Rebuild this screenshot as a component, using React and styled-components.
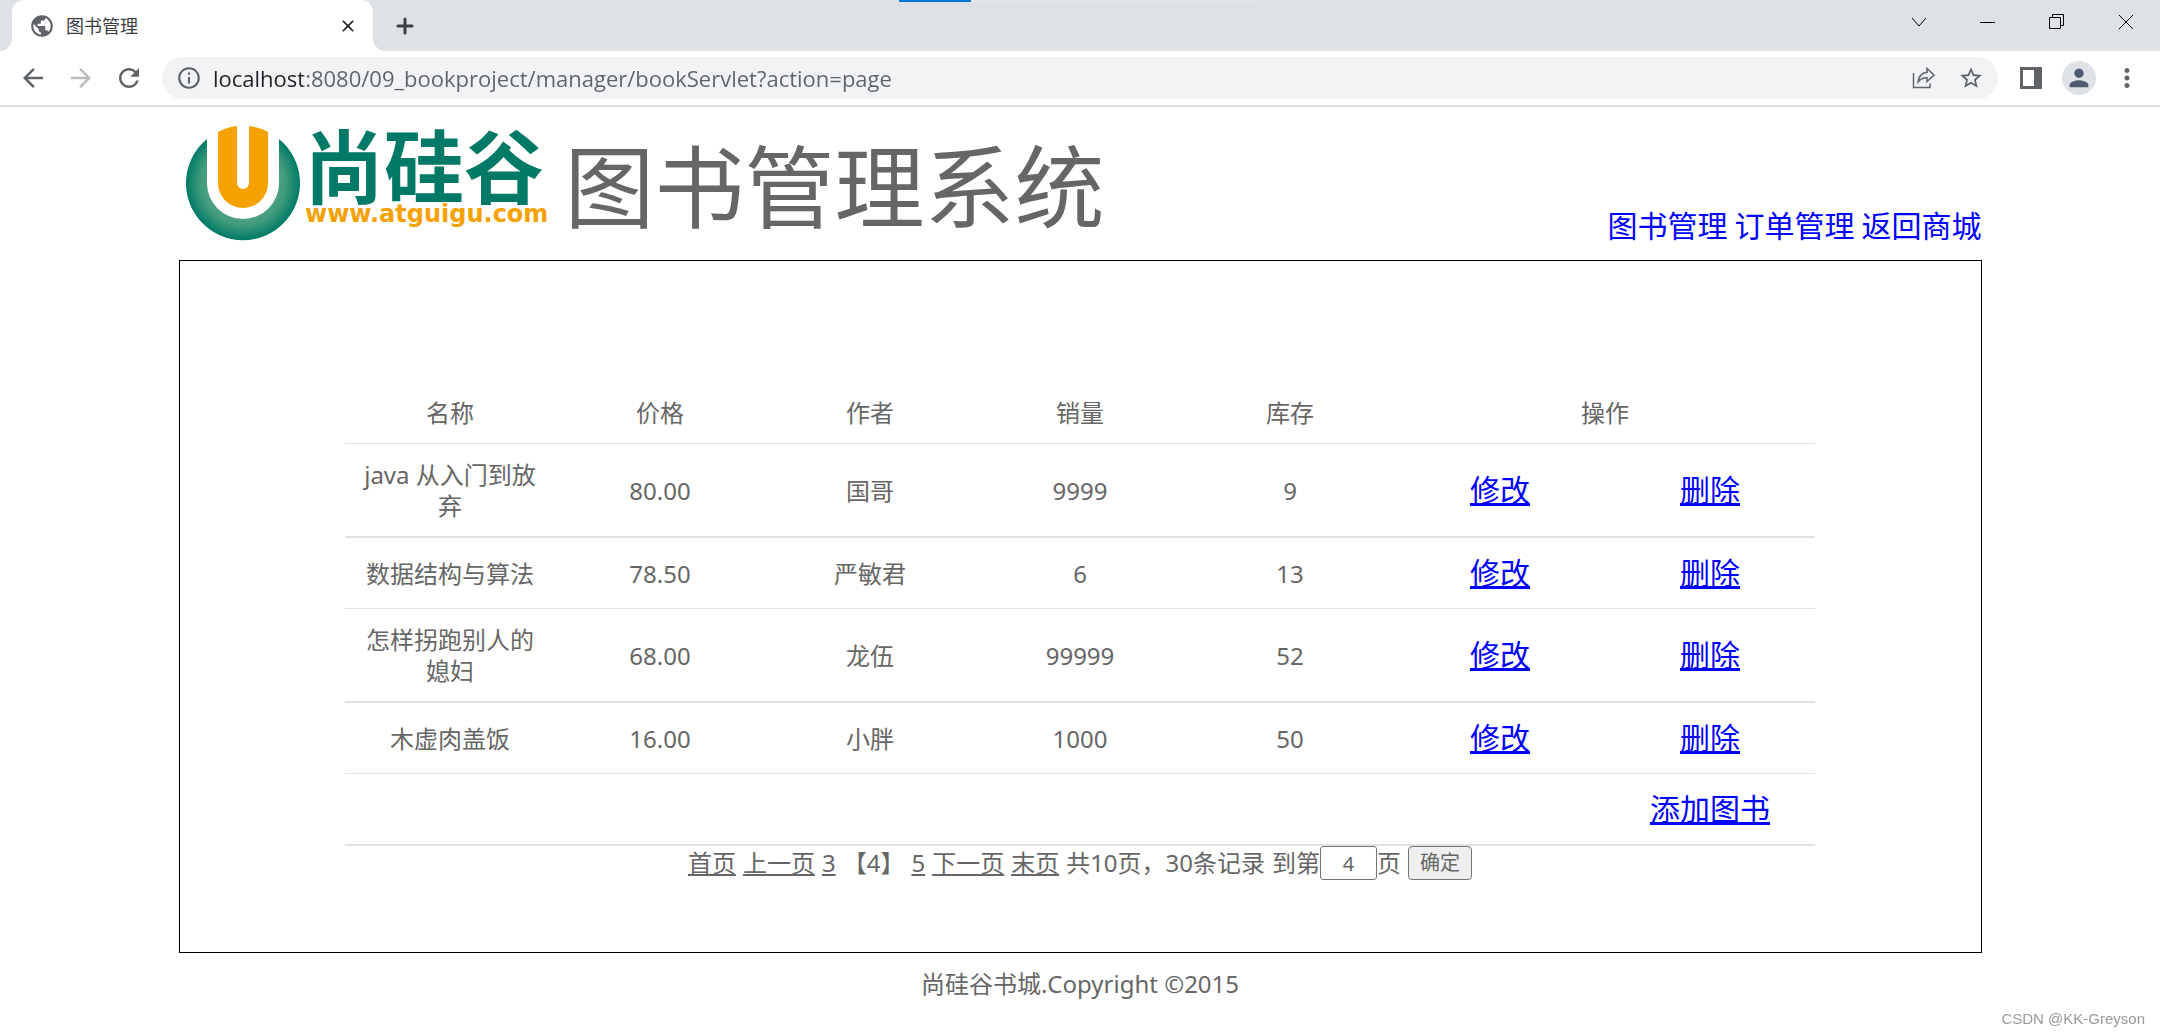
import React from 'react';
import styled, {createGlobalStyle} from 'styled-components';
import {
    MdArrowBack,
    MdArrowForward,
    MdClose,
    MdInfoOutline,
    MdMoreVert,
    MdPerson,
    MdPublic,
    MdRefresh,
    MdStarBorder
} from 'react-icons/md';

const books=[
    {name:'java 从入门到放弃',price:'80.00',author:'国哥',sales:'9999',stock:'9'},
    {name:'数据结构与算法',price:'78.50',author:'严敏君',sales:'6',stock:'13'},
    {name:'怎样拐跑别人的媳妇',price:'68.00',author:'龙伍',sales:'99999',stock:'52'},
    {name:'木虚肉盖饭',price:'16.00',author:'小胖',sales:'1000',stock:'50'}
];

function ShareIcon(){
    return(
        <svg width="24" height="24" viewBox="0 0 24 24" fill="none" stroke="#5f6368" strokeWidth="1.5">
        <path d="M1.5 7V21.5H18V17.5" />
        <path d="M15 2.5L22 9L15 15.5V11.8C11 11.5 8.500 12.800 6 16C6.700 10.500 9.500 7 15 6.300Z" />
        </svg>
    );
}

function PanelIcon(){
    return(
        <svg width="22" height="22" viewBox="0 0 22 22">
        <rect width="22" height="22" fill="#5f6368" />
        <rect x="3" y="3" width="11" height="16" fill="#fff" />
        </svg>
    );
}

function Logo(){
    return(
        <LogoSvg width="384" height="143" viewBox="0 -10 384 143" role="img" aria-label="尚硅谷">
        <defs>
        <radialGradient id="ball" gradientUnits="userSpaceOnUse" cx="64" cy="66" r="57">
        <stop offset="0.6" stopColor="#4fa283" />
        <stop offset="0.75" stopColor="#3f9a7b" />
        <stop offset="1" stopColor="#007a66" />
        </radialGradient>
        </defs>
        <path d="M28 22A57 57 0 1 0 100 22V66A36 36 0 0 1 28 66Z" fill="url(#ball)" />
        <path d="M39 15Q48 10 58 9V66A6 6 0 0 0 70 66V9Q80 10 89 15V66A25 25 0 0 1 39 66Z" fill="#f5a100" />
        <LogoName x="125" y="80">尚硅谷</LogoName>
        <LogoUrl x="126" y="105">www.atguigu.com</LogoUrl>
        </LogoSvg>
    );
}

function Browser(){
    return(
        <BrowserWrapper>
        <LoadBar><span /></LoadBar>
        <TabStrip>
        <Tab>
        <MdPublic size={26} color="#5f6368" />
        <TabTitle>图书管理</TabTitle>
        <IconButton aria-label="关闭标签页"><MdClose size={20} color="#202124" /></IconButton>
        </Tab>
        <NewTab aria-label="新标签页">
        <svg width="18" height="18" stroke="#3c4043" strokeWidth="3" strokeLinecap="round"><path d="M9 2V16M2 9H16" /></svg>
        </NewTab>
        <WindowButtons>
        <IconButton aria-label="标签列表">
        <svg width="16" height="16" fill="none" stroke="#000"><path d="M1 4L8 12L15 4" /></svg>
        </IconButton>
        <IconButton aria-label="最小化">
        <svg width="16" height="16"><rect y="8" width="15" height="1" /></svg>
        </IconButton>
        <IconButton aria-label="还原">
        <svg width="16" height="16" fill="none" stroke="#000"><path d="M0.500 3.500H11.500V14.500H0.500ZM3.500 3.500V0.500H14.500V11.500H11.500" /></svg>
        </IconButton>
        <IconButton aria-label="关闭">
        <svg width="16" height="16" fill="none" stroke="#000"><path d="M1 1L15 15M15 1L1 15" /></svg>
        </IconButton>
        </WindowButtons>
        </TabStrip>
        <Toolbar>
        <NavButtons>
        <IconButton aria-label="后退"><MdArrowBack size={30} color="#5f6368" /></IconButton>
        <IconButton aria-label="前进"><MdArrowForward size={30} color="#babcbe" /></IconButton>
        <IconButton aria-label="重新加载"><MdRefresh size={30} color="#5f6368" /></IconButton>
        </NavButtons>
        <AddressBar>
        <MdInfoOutline size={26} color="#5f6368" />
        <Address aria-label="地址" defaultValue="localhost:8080/09_bookproject/manager/bookServlet?action=page" />
        <IconButton aria-label="分享"><ShareIcon /></IconButton>
        <IconButton aria-label="收藏"><MdStarBorder size={26} color="#5f6368" /></IconButton>
        </AddressBar>
        <Tools>
        <IconButton aria-label="侧边栏"><PanelIcon /></IconButton>
        <Avatar aria-label="用户"><MdPerson size={28} color="#4f5b70" /></Avatar>
        <MenuButton aria-label="更多"><MdMoreVert size={30} color="#5f6368" /></MenuButton>
        </Tools>
        </Toolbar>
        </BrowserWrapper>
    );
}

function BookTable(){
    return(
        <Table>
        <thead>
        <tr>
        <th>名称</th>
        <th>价格</th>
        <th>作者</th>
        <th>销量</th>
        <th>库存</th>
        <th colSpan="2">操作</th>
        </tr>
        </thead>
        <tbody>
        {books.map(book=>(
            <tr key={book.name}>
            <td>{book.name}</td>
            <td>{book.price}</td>
            <td>{book.author}</td>
            <td>{book.sales}</td>
            <td>{book.stock}</td>
            <td><ActionLink href="#edit">修改</ActionLink></td>
            <td><ActionLink href="#delete">删除</ActionLink></td>
            </tr>
        ))}
        <tr>
        <td colSpan="6"></td>
        <td><ActionLink href="#add">添加图书</ActionLink></td>
        </tr>
        </tbody>
        </Table>
    );
}

function Pagination(){
    return(
        <PageNav>
        <a href="#first">首页</a>
        <a href="#prev">上一页</a>
        <a href="#3">3</a>
        <span>【4】</span>
        <a href="#5">5</a>
        <a href="#next">下一页</a>
        <a href="#last">末页</a>
        <span>共10页，30条记录</span>
        <PageJump>
        <label htmlFor="pn">到第</label>
        <PageInput id="pn" defaultValue="4" />
        <span>页</span>
        </PageJump>
        <PageButton type="button">确定</PageButton>
        </PageNav>
    );
}

export default function App(){
    return(
        <>
        <GlobalStyle />
        <Browser />
        <Page>
        <Header>
        <Logo />
        <Title>图书管理系统</Title>
        <Menu>
        <a href="#books">图书管理</a>
        <a href="#orders">订单管理</a>
        <a href="#home">返回商城</a>
        </Menu>
        </Header>
        <Main>
        <BookTable />
        <Pagination />
        </Main>
        <Footer>尚硅谷书城.Copyright ©2015</Footer>
        </Page>
        <Watermark>CSDN @KK-Greyson</Watermark>
        </>
    );
}

const GlobalStyle=createGlobalStyle`
*{
    box-sizing:border-box;
}
body{
    margin:0;
    background:#fff;
    color:#666;
    font-family:"Noto Sans","Noto Sans CJK SC",sans-serif;
    font-size:24px;
}
button,input{
    font-family:inherit;
}
svg{
    flex:none;
    display:block;
}
`

const BrowserWrapper=styled.div`
position:relative;
border-bottom:2px solid #dadbdd;
`

const LoadBar=styled.div`
position:absolute;
top:0;
left:899px;
width:362px;
height:2px;
background:#e5e5e6;
span{
    display:block;
    width:72px;
    height:2px;
    background:#0078d7;
}
`

const TabStrip=styled.div`
display:flex;
align-items:flex-start;
height:51px;
padding-left:12px;
background:#dee1e6;
`

const Tab=styled.div`
position:relative;
display:flex;
align-items:center;
gap:11px;
width:361px;
height:51px;
padding:0 15px 0 17px;
border-radius:12px 12px 0 0;
background:#fff;
&::before,&::after{
    content:'';
    position:absolute;
    bottom:0;
    width:12px;
    height:12px;
}
&::before{
    left:-12px;
    background:radial-gradient(circle at 0 0,transparent 12px,#fff 12px);
}
&::after{
    right:-12px;
    background:radial-gradient(circle at 100% 0,transparent 12px,#fff 12px);
}
`

const TabTitle=styled.span`
flex:1;
color:#3c4043;
font-size:18px;
line-height:24px;
`

const IconButton=styled.button`
display:flex;
align-items:center;
justify-content:center;
padding:0;
border:0;
background:none;
`

const NewTab=styled(IconButton)`
height:51px;
margin-left:23px;
`

const WindowButtons=styled.div`
display:flex;
gap:53px;
height:43px;
margin-left:auto;
padding-right:26px;
`

const Toolbar=styled.div`
display:flex;
align-items:center;
height:54px;
padding:0 18px;
`

const NavButtons=styled.div`
display:flex;
gap:18px;
margin-right:18px;
`

const AddressBar=styled.div`
flex:1;
display:flex;
align-items:center;
gap:22px;
height:42px;
padding:0 14px;
border-radius:21px;
background:#f1f3f4;
`

const Address=styled.input`
flex:1;
padding:0;
margin-left:-11px;
border:0;
outline:0;
color:transparent;
background:linear-gradient(to right,#202124 90px,#5f6368 90px);
background-clip:text;
font-family:"Open Sans",sans-serif;
font-size:22px;
line-height:30px;
`

const Tools=styled.div`
display:flex;
align-items:center;
gap:20px;
margin-left:22px;
`

const Avatar=styled(IconButton)`
width:34px;
height:34px;
border-radius:50%;
background:#dee1e6;
`

const MenuButton=styled(IconButton)`
margin-left:-4px;
`

const Page=styled.div`
max-width:1803px;
margin:0 auto;
`

const Header=styled.header`
display:flex;
align-items:flex-end;
height:153px;
padding-bottom:14px;
`

const LogoSvg=styled.svg`
align-self:flex-start;
`

const Title=styled.h1`
margin:0 0 0 2px;
font-size:90px;
font-weight:400;
line-height:120px;
`

const Menu=styled.nav`
display:flex;
gap:7px;
margin-left:auto;
font-size:30px;
line-height:40px;
a{
    color:#00f;
    text-decoration:none;
}
`

const Main=styled.main`
padding:121px 0 72px;
border:1px solid #000;
`

const Table=styled.table`
width:1470px;
max-width:100%;
margin:0 auto;
border-collapse:separate;
border-spacing:0;
table-layout:fixed;
text-align:center;
line-height:31px;
th,td{
    padding:15px;
    border-bottom:1px solid #e1e1e1;
    font-weight:400;
}
tbody tr:nth-child(odd) td{
    border-bottom-width:2px;
}
`

const ActionLink=styled.a`
display:block;
color:#00f;
font-size:30px;
line-height:40px;
`

const PageNav=styled.div`
display:flex;
justify-content:center;
align-items:center;
gap:7px;
line-height:34px;
a{
    color:inherit;
}
`

const PageJump=styled.div`
display:flex;
align-items:center;
`

const PageInput=styled.input`
width:57px;
height:34px;
padding:0;
border:1px solid #767676;
border-radius:3px;
color:#666;
font-size:20px;
text-align:center;
`

const PageButton=styled.button`
height:34px;
padding:0 11px;
border:1px solid #767676;
border-radius:4px;
background:#efefef;
color:#666;
font-size:20px;
line-height:30px;
`

const Footer=styled.footer`
padding-top:15px;
text-align:center;
line-height:31px;
`

const Watermark=styled.div`
position:fixed;
right:15px;
bottom:7px;
color:#999;
font-family:"Liberation Sans",sans-serif;
font-size:15px;
line-height:20px;
`

const LogoName=styled.text`
fill:#007a66;
font-family:"Liberation Sans","Noto Sans CJK SC",sans-serif;
font-size:80px;
font-weight:700;
`

const LogoUrl=styled.text`
fill:#f5a100;
font-family:"DejaVu Sans",sans-serif;
font-size:24px;
font-weight:700;
`
